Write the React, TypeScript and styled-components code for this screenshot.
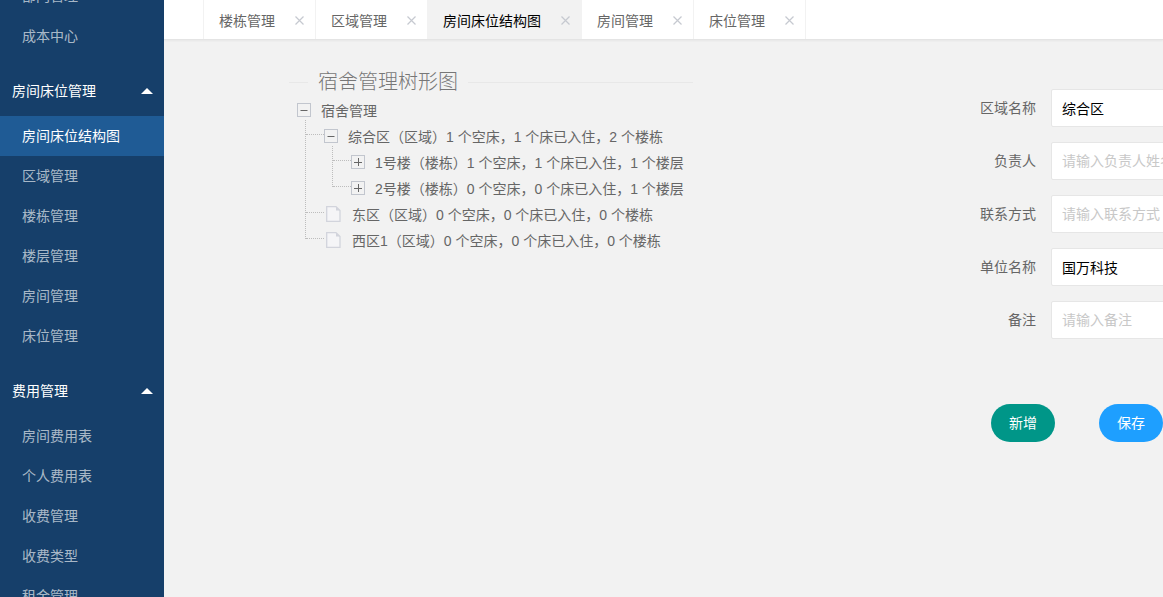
import React from "react";
import styled, { createGlobalStyle } from "styled-components";

const Global = createGlobalStyle`
  html, body { margin: 0; padding: 0; height: 100%; overflow: hidden; background: #f2f2f2; }
  body { font-family: "Liberation Sans", "Noto Sans CJK SC", sans-serif; font-size: 14px; color: #666; }
  * { box-sizing: border-box; }
`;

const Page = styled.div`
  display: flex;
  width: 1163px;
  height: 597px;
  overflow: hidden;
`;

const Sidebar = styled.aside`
  flex: none;
  width: 164px;
  height: 597px;
  overflow: hidden;
  background: #163f6a;
`;

const SideScroll = styled.nav`
  margin-top: -24px;
`;

const Group = styled.div`
  margin-top: 10px;
`;

const GroupHead = styled.div`
  display: flex;
  align-items: center;
  justify-content: space-between;
  height: 50px;
  padding: 0 11px 2px 12px;
  color: #fff;
`;

const Caret = styled.span`
  width: 0;
  height: 0;
  margin-top: 2px;
  border-left: 6px solid transparent;
  border-right: 6px solid transparent;
  border-bottom: 6px solid #fff;
`;

const MenuItem = styled.div<{ $active?: boolean }>`
  height: 40px;
  line-height: 40px;
  padding-left: 22px;
  color: ${(p) => (p.$active ? "#fff" : "rgba(255,255,255,.65)")};
  background: ${(p) => (p.$active ? "#1f5b95" : "transparent")};
`;

const Main = styled.main`
  flex: 1;
  min-width: 0;
  display: flex;
  flex-direction: column;
`;

const TabBar = styled.header`
  flex: none;
  display: flex;
  height: 40px;
  padding-left: 39px;
  background: #fff;
  border-bottom: 1px solid #e4e4e4;
  box-shadow: 0 1px 2px rgba(0, 0, 0, 0.05);
`;

const Tab = styled.div<{ $active?: boolean }>`
  display: flex;
  align-items: center;
  height: 39px;
  padding: 0 11px 0 15px;
  color: ${(p) => (p.$active ? "#000" : "#666")};
  background: ${(p) => (p.$active ? "#f2f2f2" : "#fff")};
  border-left: 1px solid #f2f2f2;
  &:last-child {
    border-right: 1px solid #f2f2f2;
  }
`;

const CloseIcon = styled.svg`
  flex: none;
  width: 9px;
  height: 9px;
  margin: 2px 0 0 20px;
  stroke: #c6c9d0;
  stroke-width: 1.2;
  fill: none;
`;

const Content = styled.div`
  flex: 1;
  display: flex;
  align-items: flex-start;
  padding: 28px 0 0 125px;
  overflow: hidden;
`;

const TreePanel = styled.fieldset`
  flex: none;
  width: 404px;
  margin: 0;
  padding: 1px 0 0 8px;
  border: 0;
  border-top: 1px solid #e8e8e8;
`;

const TreeTitle = styled.legend`
  margin-left: 11px;
  padding: 0 10px;
  font-size: 20px;
  font-weight: 300;
  line-height: 28px;
  color: #777;
`;

const TreeList = styled.ul<{ $nested?: boolean }>`
  position: relative;
  list-style: none;
  margin: 0;
  padding: 0 0 0 ${(p) => (p.$nested ? "27px" : "0")};
  &::before {
    content: ${(p) => (p.$nested ? '""' : "none")};
    position: absolute;
    left: 8px;
    top: -3px;
    bottom: 14px;
    border-left: 1px dotted #bdbdbd;
  }
`;

const TreeRow = styled.div<{ $link?: boolean }>`
  position: relative;
  display: flex;
  align-items: center;
  height: 26px;
  white-space: nowrap;
  color: #666;
  &::before {
    content: ${(p) => (p.$link ? '""' : "none")};
    position: absolute;
    left: -18px;
    top: 11px;
    width: 18px;
    border-top: 1px dotted #bdbdbd;
  }
`;

const SwitchIcon = styled.svg`
  flex: none;
  width: 14px;
  height: 14px;
  margin-right: 10px;
`;

const FileIcon = styled.svg`
  flex: none;
  width: 15px;
  height: 16px;
  margin: 0 11px 0 2px;
`;

const FormPanel = styled.form`
  flex: none;
  width: 400px;
  margin: 21px 0 0 273px;
`;

const FormRow = styled.div`
  display: flex;
  align-items: center;
  margin-bottom: 15px;
`;

const FormLabel = styled.label`
  flex: none;
  width: 70px;
  margin-right: 15px;
  padding-bottom: 2px;
  text-align: right;
  color: #666;
`;

const TextInput = styled.input`
  flex: none;
  width: 300px;
  height: 38px;
  padding: 0 10px;
  font: inherit;
  color: #000;
  background: #fff;
  border: 1px solid #e6e6e6;
  border-radius: 2px;
  outline: none;
  &::placeholder {
    color: #c8c8c8;
  }
`;

const Actions = styled.div`
  display: flex;
  gap: 44px;
  margin: 65px 0 0 25px;
`;

const ActionButton = styled.button<{ $color: string }>`
  width: 64px;
  height: 38px;
  padding: 0 0 2px;
  border: 0;
  border-radius: 19px;
  font: inherit;
  color: #fff;
  background: ${(p) => p.$color};
`;

const Switch = ({ open }: { open?: boolean }) => (
  <SwitchIcon viewBox="0 0 14 14">
    <rect x="0.5" y="0.5" width="13" height="13" fill="none" stroke="#c2c6ce" />
    <path d={open ? "M3.5 7.5H10.5" : "M3 7.5H11"} stroke="#666" />
    {!open && <path d="M7.5 3V11" stroke="#666" />}
  </SwitchIcon>
);

const File = () => (
  <FileIcon viewBox="0 0 15 16">
    <path d="M0.7 0.7H10L14 4.5V15.3H0.7Z" fill="#f5f5f7" stroke="#d2d4dc" strokeWidth="1.3" />
    <path d="M10 0.7V4.5H14Z" fill="#d2d4dc" />
  </FileIcon>
);

const tabs = ["楼栋管理", "区域管理", "房间床位结构图", "房间管理", "床位管理"];
const groupOne = ["房间床位结构图", "区域管理", "楼栋管理", "楼层管理", "房间管理", "床位管理"];
const groupTwo = ["房间费用表", "个人费用表", "收费管理", "收费类型", "租金管理"];
const fields = [
  { label: "区域名称", value: "综合区", placeholder: "请输入区域名称" },
  { label: "负责人", value: "", placeholder: "请输入负责人姓名" },
  { label: "联系方式", value: "", placeholder: "请输入联系方式" },
  { label: "单位名称", value: "国万科技", placeholder: "请输入单位名称" },
  { label: "备注", value: "", placeholder: "请输入备注" },
];

export default function App() {
  return (
    <Page>
      <Global />
      <Sidebar>
        <SideScroll>
          <MenuItem>部门管理</MenuItem>
          <MenuItem>成本中心</MenuItem>
          <Group>
            <GroupHead>
              房间床位管理
              <Caret />
            </GroupHead>
            {groupOne.map((m, i) => (
              <MenuItem key={m} $active={i === 0}>
                {m}
              </MenuItem>
            ))}
          </Group>
          <Group>
            <GroupHead>
              费用管理
              <Caret />
            </GroupHead>
            {groupTwo.map((m) => (
              <MenuItem key={m}>{m}</MenuItem>
            ))}
          </Group>
        </SideScroll>
      </Sidebar>
      <Main>
        <TabBar>
          {tabs.map((t) => (
            <Tab key={t} $active={t === "房间床位结构图"}>
              {t}
              <CloseIcon viewBox="0 0 9 9">
                <path d="M0.5 0.5L8.5 8.5M8.5 0.5L0.5 8.5" />
              </CloseIcon>
            </Tab>
          ))}
        </TabBar>
        <Content>
          <TreePanel>
            <TreeTitle>宿舍管理树形图</TreeTitle>
            <TreeList>
              <li>
                <TreeRow>
                  <Switch open />
                  宿舍管理
                </TreeRow>
                <TreeList $nested>
                  <li>
                    <TreeRow $link>
                      <Switch open />
                      综合区（区域）1 个空床，1 个床已入住，2 个楼栋
                    </TreeRow>
                    <TreeList $nested>
                      <li>
                        <TreeRow $link>
                          <Switch />
                          1号楼（楼栋）1 个空床，1 个床已入住，1 个楼层
                        </TreeRow>
                      </li>
                      <li>
                        <TreeRow $link>
                          <Switch />
                          2号楼（楼栋）0 个空床，0 个床已入住，1 个楼层
                        </TreeRow>
                      </li>
                    </TreeList>
                  </li>
                  <li>
                    <TreeRow $link>
                      <File />
                      东区（区域）0 个空床，0 个床已入住，0 个楼栋
                    </TreeRow>
                  </li>
                  <li>
                    <TreeRow $link>
                      <File />
                      西区1（区域）0 个空床，0 个床已入住，0 个楼栋
                    </TreeRow>
                  </li>
                </TreeList>
              </li>
            </TreeList>
          </TreePanel>
          <FormPanel>
            {fields.map((f) => (
              <FormRow key={f.label}>
                <FormLabel>{f.label}</FormLabel>
                <TextInput defaultValue={f.value} placeholder={f.placeholder} />
              </FormRow>
            ))}
            <Actions>
              <ActionButton type="button" $color="#009688">
                新增
              </ActionButton>
              <ActionButton type="button" $color="#1e9fff">
                保存
              </ActionButton>
            </Actions>
          </FormPanel>
        </Content>
      </Main>
    </Page>
  );
}
